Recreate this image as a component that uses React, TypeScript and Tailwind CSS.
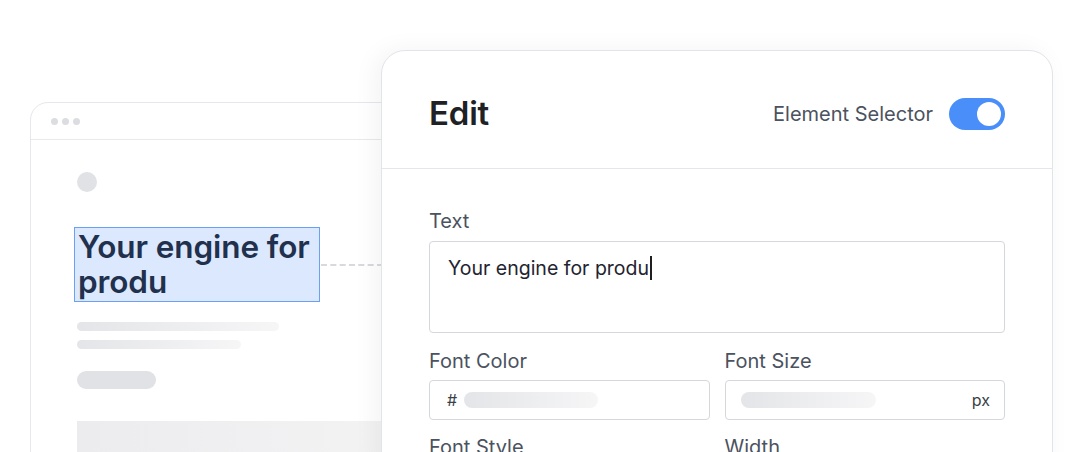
import React from "react";

const Skeleton: React.FC<{ className?: string }> = ({ className = "" }) => (
  <div className={`rounded-full bg-gradient-to-r from-[#e4e5e8] to-[#f6f6f7] ${className}`} />
);

const BrowserMock: React.FC = () => (
  <div className="w-[440px] h-[400px] rounded-tl-[18px] border border-[#e5e7eb] bg-white">
    <div className="flex h-[37px] items-center gap-[4px] border-b border-[#e8e9ec] pl-[20px]">
      <span className="h-[7px] w-[7px] rounded-full bg-[#dcdde1]" />
      <span className="h-[7px] w-[7px] rounded-full bg-[#dcdde1]" />
      <span className="h-[7px] w-[7px] rounded-full bg-[#dcdde1]" />
    </div>
    <div className="pl-[46px] pt-[32px]">
      <div className="h-[20px] w-[20px] rounded-full bg-[#e1e2e6]" />
      <div className="mt-[35px] -ml-[3px] w-[246px] border border-[#6aa1f5] bg-[#dbe8fd] pl-[3px] pt-[1px] pb-[2px]">
        <p className="text-[31.5px] leading-[35px] font-semibold tracking-[-0.1px] text-[#21304d] whitespace-nowrap">
          Your engine for
          <br />
          produ
        </p>
      </div>
      <Skeleton className="mt-[20px] h-[9px] w-[202px]" />
      <Skeleton className="mt-[9px] h-[9px] w-[164px]" />
      <div className="mt-[22px] h-[18px] w-[79px] rounded-full bg-[#e1e2e6]" />
      <div className="mt-[32px] h-[60px] w-[360px] bg-gradient-to-r from-[#ececee] to-[#f4f4f5]" />
    </div>
  </div>
);

const Field: React.FC<{ label: string; children: React.ReactNode }> = ({ label, children }) => (
  <div className="flex flex-col">
    <label className="text-[20px] leading-[24px] text-[#4b5260] whitespace-nowrap">{label}</label>
    <div className="mt-[7px]">{children}</div>
  </div>
);

const EditPanel: React.FC = () => (
  <div className="w-[672px] h-[440px] rounded-t-[24px] border border-[#e3e4e8] bg-white shadow-[-6px_0_24px_rgba(0,0,0,0.05)]">
    <div className="flex h-[118px] items-center justify-between border-b border-[#e5e6ea] px-[47px] pt-[9px]">
      <h2 className="text-[33px] font-semibold tracking-[-0.2px] text-[#202124]">Edit</h2>
      <div className="flex items-center gap-[16px]">
        <span className="text-[20px] text-[#4b5260]">Element Selector</span>
        <div className="flex h-[32px] w-[56px] items-center justify-end rounded-full bg-[#4a8efa] pr-[4px]">
          <span className="h-[24px] w-[24px] rounded-full bg-white" />
        </div>
      </div>
    </div>
    <div className="flex flex-col gap-[16px] px-[47px] pt-[40px]">
      <div className="flex flex-col">
        <label className="text-[20px] leading-[24px] text-[#4b5260]">Text</label>
        <div className="mt-[8px] h-[92px] rounded-[4px] border border-[#d5d7dc] px-[18px] pt-[9px]">
          <span className="text-[19.5px] leading-[26px] text-[#1f2430]">Your engine for produ</span>
          <span className="ml-[1px] inline-block h-[24px] w-[1.5px] translate-y-[5px] bg-[#1f1f1f]" />
        </div>
      </div>
      <div className="grid grid-cols-2 gap-x-[15px] gap-y-[15px]">
        <Field label="Font Color">
          <div className="flex h-[40px] items-center gap-[7px] rounded-[4px] border border-[#d5d7dc] px-[17px]">
            <span className="text-[16px] text-[#3b3f48]">#</span>
            <Skeleton className="h-[16px] w-[134px]" />
          </div>
        </Field>
        <Field label="Font Size">
          <div className="flex h-[40px] items-center justify-between rounded-[4px] border border-[#d5d7dc] pl-[15px] pr-[14px]">
            <Skeleton className="h-[16px] w-[135px]" />
            <span className="text-[16px] text-[#3b3f48]">px</span>
          </div>
        </Field>
        <Field label="Font Style">
          <div className="h-[40px] rounded-[4px] border border-[#d5d7dc]" />
        </Field>
        <Field label="Width">
          <div className="h-[40px] rounded-[4px] border border-[#d5d7dc]" />
        </Field>
      </div>
    </div>
  </div>
);

export default function App() {
  return (
    <div
      className="relative h-[452px] w-[1081px] overflow-hidden bg-white"
      style={{ fontFamily: "Inter, 'Noto Sans', sans-serif" }}
    >
      <div className="pl-[30px] pt-[102px]">
        <BrowserMock />
      </div>
      <div className="absolute left-[321px] top-[264px] w-[62px] border-t-2 border-dashed border-[#d8d9dd]" />
      <div className="absolute left-[381px] top-[50px]">
        <EditPanel />
      </div>
    </div>
  );
}
